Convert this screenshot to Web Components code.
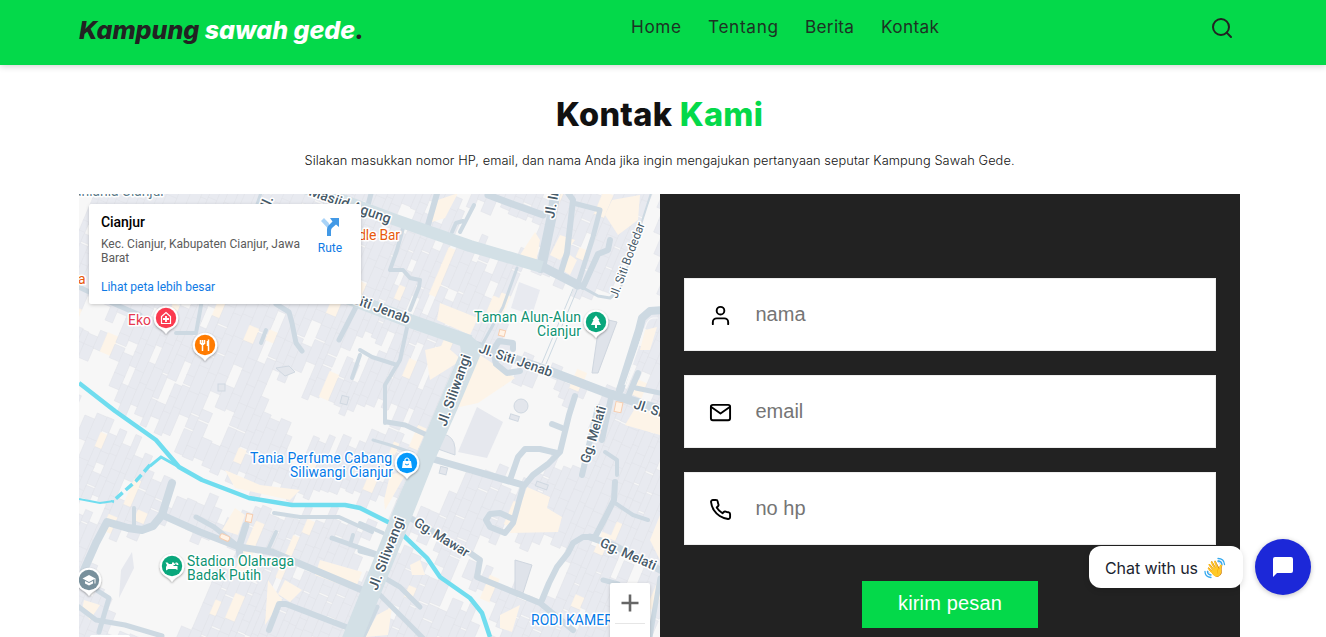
<!DOCTYPE html>
<html lang="id">
<head>
<meta charset="utf-8">
<title>Kampung Sawah Gede</title>
<style>
html,body{margin:0;height:637px;overflow:hidden;background:#fff}
body{font-family:Inter,sans-serif;color:#222}
</style>
</head>
<body>
<contact-page></contact-page>
<script>
const define=(name,html,setup)=>customElements.define(name,class extends HTMLElement{
  connectedCallback(){
    if(this.shadowRoot)return;
    const t=document.createElement('template');t.innerHTML=html;
    this.attachShadow({mode:'open'}).append(t.content.cloneNode(true));
    if(setup)setup(this,this.shadowRoot);
  }
});

/* One line of text, tracked so that it fills the width given in "w". */
define('fit-line',`<style>:host{display:block;white-space:nowrap}span{display:inline-block}</style><span><slot></slot></span>`,(el,root)=>{
  const s=root.querySelector('span');
  const w=+el.getAttribute('w'),n=el.textContent.length;
  s.style.letterSpacing=((w-s.getBoundingClientRect().width)/(n-1))+'px';
  el.style.width=w+'px';
});

const ICONS={
  search:'<circle cx="11" cy="11" r="8"/><path d="M21 21l-4.35-4.35"/>',
  user:'<path d="M20 21v-2a4 4 0 0 0-4-4H8a4 4 0 0 0-4 4v2"/><circle cx="12" cy="7" r="4"/>',
  mail:'<path d="M4 4h16c1.1 0 2 .9 2 2v12c0 1.1-.9 2-2 2H4c-1.1 0-2-.9-2-2V6c0-1.1.9-2 2-2z"/><path d="M22 6l-10 7L2 6"/>',
  phone:'<path d="M22 16.92v3a2 2 0 0 1-2.18 2 19.79 19.79 0 0 1-8.63-3.07 19.5 19.5 0 0 1-6-6 19.79 19.79 0 0 1-3.07-8.67A2 2 0 0 1 4.11 2h3a2 2 0 0 1 2 1.72 12.84 12.84 0 0 0 .7 2.81 2 2 0 0 1-.45 2.11L8.09 9.91a16 16 0 0 0 6 6l1.27-1.27a2 2 0 0 1 2.11-.45 12.84 12.84 0 0 0 2.81.7A2 2 0 0 1 22 16.92z"/>'
};
define('line-icon',`<style>:host{display:block;width:24px;height:24px;flex:none}svg{display:block;width:100%;height:100%}</style><svg viewBox="0 0 24 24" fill="none" stroke="currentColor" stroke-width="2" stroke-linecap="round" stroke-linejoin="round"></svg>`,(el,root)=>{
  root.querySelector('svg').innerHTML=ICONS[el.getAttribute('name')];
});

define('site-header',`<style>
:host{display:flex;align-items:flex-start;height:65px;box-sizing:border-box;padding:0 92px 0 79px;background:#04d94a;box-shadow:0 1px 7px rgba(0,0,0,.2);position:relative}
.logo{font:italic 800 25px/61px Inter,sans-serif;color:#222}
.logo span{color:#fff}
nav{display:flex;gap:27px;margin-left:267px;font:400 17.2px/54px Inter,sans-serif;color:#1d3324}
line-icon{margin:16px 0 0 auto;color:#222}
</style>
<fit-line class="logo" w="285">Kampung <span>sawah gede</span>.</fit-line>
<nav><fit-line w="50">Home</fit-line><fit-line w="70">Tentang</fit-line><fit-line w="49">Berita</fit-line><fit-line w="58">Kontak</fit-line></nav>
<line-icon name="search"></line-icon>`);

define('section-title',`<style>
:host{display:flex;flex-direction:column;align-items:center;padding:30px 7px 0 0;height:99px}
.h{font:800 32.5px/40px Inter,sans-serif;color:#111}.h span{color:#04d94a}
.p{font:300 12.8px/20px Inter,sans-serif;margin-top:16px;color:#111}
</style>
<fit-line class="h" w="207">Kontak <span>Kami</span></fit-line>
<fit-line class="p" w="710">Silakan masukkan nomor HP, email, dan nama Anda jika ingin mengajukan pertanyaan seputar Kampung Sawah Gede.</fit-line>`);

define('form-field',`<style>
:host{display:flex;align-items:center;height:73px;box-sizing:border-box;border:1px solid #eee;background:#fff;padding:1px 0 0 24px;color:#000}
slot{display:block}
line-icon{width:23px;height:23px}
.t{font:20px/24px "Liberation Sans",Arial,sans-serif;color:#757575;margin:-2px 0 0 23.5px}
</style><line-icon></line-icon><div class="t"><slot></slot></div>`,(el,root)=>{
  const i=document.createElement('line-icon');i.setAttribute('name',el.getAttribute('icon'));
  root.querySelector('line-icon').replaceWith(i);
});

define('contact-form',`<style>
:host{display:flex;flex-direction:column;gap:24px;background:#222;padding:84px 24px 0;box-sizing:border-box}
button{align-self:center;width:176px;height:47px;margin-top:12px;border:0;padding:0 0 2px;background:#04d94a;color:#fff;font:20px/45px "Liberation Sans",Arial,sans-serif;letter-spacing:.15px}
</style>
<form-field icon="user">nama</form-field><form-field icon="mail">email</form-field><form-field icon="phone">no hp</form-field>
<button>kirim pesan</button>`);

define('place-card',`<style>
:host{display:flex;justify-content:space-between;box-sizing:border-box;width:272px;height:100px;background:#fff;border-radius:2px;box-shadow:0 1px 4px -1px rgba(0,0,0,.3);padding:10px 12px;font:12px/14px Roboto,sans-serif;color:#5b5b5b}
.name{font-weight:500;font-size:14px;line-height:17px;color:#000;margin-bottom:6px}
.link,.go{color:#0f7ae5}.link{margin-top:15px}
.go{width:38px;text-align:center}.go svg{display:block;margin:4px auto 5px 10px}
</style>
<div><fit-line w="44" class="name">Cianjur</fit-line><fit-line w="199">Kec. Cianjur, Kabupaten Cianjur, Jawa</fit-line><div>Barat</div><fit-line w="114" class="link">Lihat peta lebih besar</fit-line></div>
<div class="go"><svg width="18" height="18" viewBox="0 0 18 18"><path d="M0 3L3 0l5 5.200V8L6.500 10z" fill="#a9d3f7"/><path d="M6 18v-7q0-2 2-4l3.500-3.500L9 0h9v9l-3-2.500L11 10q-1 1-1 3v5z" fill="#4299e6"/></svg>Rute</div>`);

const poly=(p,fill,extra='')=>`<polygon points="${p}" fill="${fill}" ${extra}/>`;
const OPEN=[
 "100,530 140,535 163,520 235,552 218,575 195,637 115,637 110,600 90,575",
 "530,272 580,290 612,300 640,315 612,392 552,370 500,345 513,275",
 "652,193 660,193 660,310 640,315 612,300",
 "478,203 543,215 535,262 465,238",
 "450,405 480,380 515,378 570,392 560,450 523,485 435,458 440,430",
 "435,462 470,475 455,500 412,520 410,512",
 "495,535 560,540 568,560 550,600 520,595 480,570",
 "79,355 122,358 112,397 160,430 150,440 79,385",
 "262,373 305,385 285,412 262,400","283,404 325,385 330,410 355,425 350,445 310,440 285,430",
 "79,300 92,298 130,325 120,335 79,325","325,355 375,330 385,350 345,365",
 "335,425 385,400 385,425 360,452","205,415 230,420 225,432 208,434",
 "630,320 640,315 625,392 612,392","250,506 350,508 350,514 250,512","360,545 380,510 395,523 372,580",
 "565,400 600,405 585,470 560,460"
].map(s=>s.split(' ').map(p=>p.split(',').map(Number)));
const RIVER="79,383 115,411 156,440 179,467 202,480 249,498 292,505 345,505 360,508 390,523 403,535 427,558 440,577 470,598 482,613 490,637";
const riverPts=RIVER.split(' ').map(p=>p.split(',').map(Number));
const inside=(x,y,P)=>{let r=false;for(let i=0,j=P.length-1;i<P.length;j=i++){const[a,b]=P[i],[c,d]=P[j];if((b>y)!==(d>y)&&x<(c-a)*(y-b)/(d-b)+a)r=!r}return r};
const nearRiver=(x,y)=>{for(let i=1;i<riverPts.length;i++){const[a,b]=riverPts[i-1],[c,d]=riverPts[i];let t=((x-a)*(c-a)+(y-b)*(d-b))/((c-a)**2+(d-b)**2);t=Math.max(0,Math.min(1,t));if(Math.hypot(x-a-t*(c-a),y-b-t*(d-b))<(x<250?15:10))return true}return false};
/* Rows of narrow houses, laid out on a grid turned to the street direction. */
function houses(){
  let seed=41,o='';const rnd=()=>(seed=(seed*16807)%2147483647)/2147483647;
  const A=23*Math.PI/180,c=Math.cos(A),s=Math.sin(A);
  for(let u=-340;u<340;){const w=6+rnd()*5;
    for(let v=-340+rnd()*16;v<340;){
      const h=10+rnd()*18,mu=u+w/2,mv=v+h/2,x=370+mu*c-mv*s,y=415+mu*s+mv*c,r=rnd();
      if(x>70&&x<670&&y>180&&y<650&&r>.09&&!OPEN.some(P=>inside(x,y,P))&&!nearRiver(x,y))
        o+=`<rect x="${u.toFixed(1)}" y="${v.toFixed(1)}" width="${(w+.3).toFixed(1)}" height="${(h+(r>.25?1:-2)).toFixed(1)}" fill="${r>.955?'#fdf4e8':'#e8eaf0'}" stroke="${r>.955?'#fdf4e8':'#e0e2e8'}" stroke-width=".5"/>`;
      v+=h}
    u+=w}
  return `<g transform="translate(370 415) rotate(23)">${o}</g>`;
}
const CREAM=["527,487 550,497 547,508 562,517 558,532 510,533","432,202 458,193 445,218 432,222","535,232 540,240 536,262 520,255","560,235 575,240 560,260 550,255","612,200 640,195 638,220 618,235 605,215","570,255 577,260 570,275 562,270","440,303 478,318 470,335 437,320","425,350 445,345 462,360 430,380","450,385 480,355 515,378 478,403 455,408","390,475 408,470 385,510 384,500","225,470 260,485 300,490 290,500 235,488","320,560 362,572 355,590 315,575","285,580 302,590 290,602 278,594","235,508 245,515 238,535 222,530","84,600 100,605 90,620 82,610","377,615 392,607 388,635 365,637","640,400 660,410 660,435 625,425","645,330 657,327 650,350 640,350","650,540 660,515 660,560","268,580 282,600 265,625","410,565 420,560 425,575 412,575","500,615 520,605 512,632 500,628"];
const ROADS=[
 [7,"488,195 515,205 543,215"],[10,"556,190 552,215 541,268"],[2,"652,190 620,290"],[6,"566,190 573,200 567,253 560,275"],[5,"573,203 600,210 593,237 577,287"],[6,"610,240 608,250 598,254 583,287"],[6,"438,190 428,225"],[4,"474,205 460,232"],[4,"452,232 456,223 463,221"],
 [4,"403,228 397,250 390,270 403,270 410,278 420,280 419,287 410,310"],[3,"517,268 503,307 483,343"],[9,"545,268 578,285"],[3,"578,285 598,296 610,298 617,292"],
 [8,"664,310 650,311 642,318 639,330 620,390"],[6,"638,373 628,397"],[5,"660,393 636,388"],[6,"513,349 513,343 499,341 493,350 496,364 507,373 520,371"],
 [6,"575,396 569,415 560,452 548,464 533,475 523,487 513,523 505,533 490,527 486,520 490,514 500,513 513,519"],[6,"557,453 540,449 525,449 518,457 510,480"],[6,"552,424 562,428"],[7,"433,459 523,485"],[5,"387,422 405,425 427,435"],[3,"373,440 390,445 413,453"],
 [6,"612,393 602,440"],[6,"598,407 582,475"],[4,"605,452 617,460 617,475"],[6,"615,482 614,500 604,520 595,537 583,537 573,543 568,553 557,567 549,583 542,600"],[4,"615,503 633,515 648,520"],[7,"590,537 615,546 660,570"],
 [6,"410,518 470,553 480,560 477,577 540,603 573,630"],
 [8,"172,483 162,515 153,526 142,530 128,528 107,522 96,543 84,570"],[4,"134,508 134,527"],[7,"162,515 200,532 239,547 272,552 362,590"],[5,"196,517 214,527 239,547"],[7,"246,525 239,547 240,556"],[4,"276,532 267,552"],[4,"274,513 300,517 339,517 372,532"],[5,"332,538 380,555"],[4,"350,545 353,535"],[6,"269,630 279,604 286,604 346,627"],
 [5,"79,607 96,620 125,625 162,636"],[5,"99,632 109,598 98,591"],[4,"360,523 383,533"],[5,"360,551 375,555"],[5,"383,577 400,587 420,607"],[5,"377,592 400,615 425,640"],[5,"377,607 363,637"],
 [5,"79,287 110,302 140,315"],[4,"202,300 196,333 176,333"],[5,"276,304 289,312 292,323 296,343 302,351"],[5,"356,307 339,340"],[4,"266,330 261,343"],[4,"408,323 400,360 385,385 385,423"],[4,"360,350 372,357 397,365"],[4,"352,378 360,355"],[5,"603,580 618,584"],[3,"262,190 255,210"],[5,"372,190 368,205"],[5,"660,578 650,637"]
];
const label=(x,y,a,len,t,size=14,w=500,col='#475a69')=>`<text transform="translate(${x} ${y}) rotate(${a})" textLength="${len}" font-size="${size}" font-weight="${w}" fill="${col}">${t}</text>`;
const poi=(x,y,len,t,col)=>`<text x="${x}" y="${y}" textLength="${len}" font-size="14" fill="${col}">${t}</text>`;
const pin=(x,y,col,glyph)=>`<g transform="translate(${x} ${y})"><path d="M0 16C-2 13-5 11-8.500 8.800A12.200 12.200 0 1 1 8.500 8.800C5 11 2 13 0 16z" fill="#fff" filter="url(#sh)"/><circle r="10.200" fill="${col}"/>${glyph}</g>`;
define('area-map',`<style>
:host{display:block;position:relative;overflow:hidden;background:#f7f7f7}
svg.m{display:block;font-family:Roboto,sans-serif}
place-card{position:absolute;left:10px;top:10px}
.zoom{position:absolute;left:531px;top:389px;width:40px;height:81px;background:#fff;border-radius:2px;box-shadow:0 1px 4px -1px rgba(0,0,0,.3)}
.logo{position:absolute;left:11px;top:441px;width:40px;height:8px;background:#fff;border-radius:2px}
</style><div class="art"></div><place-card></place-card>
<div class="zoom"><svg width="40" height="54" viewBox="0 0 40 54"><path d="M11.500 20h17M20 11.500v17" stroke="#666" stroke-width="2.600"/><path d="M5 40.500h30" stroke="#e6e6e6"/></svg></div><div class="logo"></div>`,(el,root)=>{
 const road=ROADS.map(([w,p])=>`<polyline points="${p}" stroke-width="${w}"/>`).join('');
 root.querySelector('.art').innerHTML=`<svg class="m" width="581" height="443" viewBox="79 194 581 443">
 <defs><filter id="sh" x="-30%" y="-30%" width="160%" height="170%"><feDropShadow dx="0" dy="1" stdDeviation="1" flood-opacity=".4"/></filter></defs>
 ${houses()}${CREAM.map(p=>poly(p,'#fdf4e8')).join('')}
 ${poly("477,407 503,422 487,458 458,452",'#e6e8ee')}${poly("519,282 540,290 532,315 511,308",'#e8eaf0')}
 ${poly("132,552 134,568 119,598 121,570",'#e6e8ee')}
 ${poly("600,318 617,322 598,373 592,373",'#dfe3ea','stroke="#cfd6df"')}${poly("515,560 532,565 523,593 515,590",'#dfe3ea','stroke="#cfd6df"')}
 <g fill="#e3e6ec" stroke="#d0d8e1"><circle cx="521" cy="406" r="7"/><rect x="510" y="415" width="9" height="5" transform="rotate(17 514 417)"/><path d="M443 434q11 2 12 14v7l-17-6z"/><rect x="440" y="467" width="7" height="7" transform="rotate(14 443 470)"/><rect x="536" y="483" width="12" height="5" transform="rotate(20 542 485)"/><rect x="218" y="384" width="7" height="7"/><rect x="341" y="396" width="7" height="8" transform="rotate(15 344 400)"/><path d="M276 368l13-2 6 6-10 4z"/></g>
 <g fill="none" stroke="#cdd9e2" stroke-linecap="round" stroke-linejoin="round">${road}
 <path d="M573 289L542 363M577 290L546 364" stroke-width="1"/></g>
 <path d="M658 318h-5q-5 1-7 7L625 385" fill="none" stroke="#f7f7f7" stroke-width="1.200"/>
 <g fill="none" stroke="#70ddef"><polyline points="${RIVER}" stroke-width="4.500" stroke-linejoin="round"/><path d="M179 467L161 457L150 466" stroke-width="3"/><path d="M150 465L136 481L112 502" stroke-width="3.500" stroke-dasharray="9 4"/><path d="M114 501L100 503L79 499" stroke-width="2"/></g>
 <g fill="none" stroke="#d3e0e6" stroke-linejoin="round"><polyline points="295,185 345,201 393,219 470,246 542,267" stroke-width="12"/><polyline points="330,291 360,302 410,321 470,342" stroke-width="14"/></g>
 <polyline points="475,345 552,372 607,393 665,411" fill="none" stroke="#cdd9e2" stroke-width="9"/>
 ${poly("458,334 470,335 484,347 480,356 458,408 433,464 406,532 362,640 341,640 395,506 435,411 461,351",'#d3e0e6')}
 <g fill="#fff3e6" stroke="#f6cdb0"><rect x="499" y="330" width="6" height="6" transform="rotate(15 502 333)"/><rect x="615" y="402" width="7" height="10" transform="rotate(12 618 407)"/><rect x="246" y="514" width="6" height="8" transform="rotate(12 249 518)"/><rect x="220" y="535" width="10" height="5" rx="2" transform="rotate(24 225 537)"/></g>
 <g paint-order="stroke" stroke="#fff" stroke-width="3" stroke-linejoin="round">
 ${label(446,427,-70.5,75,'Jl. Siliwangi')}${label(377,591,-69,77,'Jl. Siliwangi')}
 ${label(478,352,19,77,'Jl. Siti Jenab',13.5)}${label(334,296,20.5,79,'Jl. Siti Jenab')}${label(633,408,18,77,'Jl. Siti Jenab',13.5)}
 ${label(308,195,19.500,86,'Masjid Agung')}${label(554,219,-80,44,'Jl. Ir. H')}${label(267,213,-65,16,'Jl.')}
 ${label(617,299,-69.500,80,'Jl. Siti Bodedar',12,400)}
 ${label(589,464,-73,59,'Gg. Melati',13.500)}${label(599,546,24,60,'Gg. Melati',13.500)}${label(413,525,31.500,62,'Gg. Mawar',13.500)}
 ${poi(474,322,107,'Taman Alun-Alun','#0d9271')}${poi(537,336,44,'Cianjur','#0d9271')}
 ${poi(250,463,142,'Tania Perfume Cabang','#067be8')}${poi(290,477,103,'Siliwangi Cianjur','#067be8')}
 ${poi(187,566,107,'Stadion Olahraga','#0d9271')}${poi(187,580,74,'Badak Putih','#0d9271')}
 ${poi(128,325,23,'Eko','#e63950')}${poi(333,240,67,'Noodle Bar','#e8590c')}${poi(78,284,8,'a','#e8590c')}${poi(531,625,91,'RODI KAMERA','#067be8')}
 ${poi(74,196,91,'aniania Cianjur','#5c7b8a')}
 </g>
 ${pin(166,318,'#fb3a4f','<path d="M-4.500 5.500V-1.500L0-5.500l4.500 4V5.500z" fill="none" stroke="#fff" stroke-width="1.200"/><path d="M0-2v6M-3 1h6" stroke="#fff" stroke-width="1.800"/>')}
 ${pin(205,345,'#ff7b00','<path d="M-4.500-5v4M-2.500-5v4M-.5-5v4M-2.500-1v7M3.500-5.500V6M2.500-4v5" stroke="#fff" stroke-width="1.500"/><path d="M-5-2h5l-1 2h-3z" fill="#fff"/>')}
 ${pin(596,322,'#0aa77c','<path d="M0-6.500l3.500 4.500H2.500L5 3H1v3h-2V3h-4l2.500-5h-1z" fill="#fff"/>')}
 ${pin(407,463,'#0699fb','<path d="M-4-2h8l1 7H-5z" fill="#fff"/><path d="M-2-2v-1.500q2-3 4 0V-2" fill="none" stroke="#fff" stroke-width="1.200"/><path d="M-2 1q2 2 4 0" fill="none" stroke="#0699fb"/>')}
 ${pin(172,566,'#0aa77c','<path d="M-6.500-3.500h2l1.500 1.500h3v-1.500h2V-2q1-2 3-1.500 1.500.500 1.500 2.500H1.500v1H5.500v4l-2-1h-7l-2.500 1.500V1l1-2z" fill="#fff"/><circle cx="3.800" cy="-1.800" r=".8" fill="#0aa77c"/>')}
 ${pin(89,580,'#78909c','<path d="M0-5l6.500 3.500L0 2l-6.500-3.500z" fill="#fff"/><path d="M-4 1v2.500L0 5.500l4-2V1L0 3z" fill="#fff"/><path d="M6-1.500v5" stroke="#fff"/>')}
 </svg>`;
});

define('chat-widget',`<style>
:host{position:absolute;right:15px;top:539px;display:flex;align-items:center;gap:12px}
.b{display:flex;align-items:center;box-sizing:border-box;width:154px;height:42px;padding:1px 0 0 16px;border-radius:12px;background:#fff;box-shadow:0 2px 6px rgba(0,0,0,.14);font:16px/24px Inter,sans-serif;color:#1b2430}
.e{position:relative;width:22px;height:22px;margin-left:6px;text-align:center;font:16px/23px "Noto Color Emoji",sans-serif}
.e svg{position:absolute;left:0;top:0}
.f{display:flex;align-items:center;justify-content:center;width:56px;height:56px;border-radius:50%;background:#1c28d8;box-shadow:0 1px 5px rgba(0,0,0,.25)}
</style><div class="b"><fit-line w="93">Chat with us</fit-line><span class="e">👋<svg width="22" height="22" viewBox="0 0 22 22" fill="none" stroke="#35a9ee" stroke-width="1.300" stroke-linecap="round"><path d="M14 1.500q6 0 6.500 6M14 4q3.500 0 4 3.500M1 14.500q0 5.500 6 6M3.500 14.500q0 3 3.500 3.500"/></svg></span></div>
<div class="f"><svg width="24" height="24" viewBox="0 0 24 24"><path d="M20 2H4a2 2 0 0 0-2 2v18l4-4h14a2 2 0 0 0 2-2V4a2 2 0 0 0-2-2z" fill="#fff"/></svg></div>`);

define('contact-page',`<style>
:host{display:block;position:relative;width:1326px;height:637px;overflow:hidden;background:#fff}
.row{display:grid;grid-template-columns:581px 580px;margin-left:79px;height:443px}
</style><site-header></site-header><section-title></section-title><div class="row"><area-map></area-map><contact-form></contact-form></div><chat-widget></chat-widget>`);
</script>
</body>
</html>
